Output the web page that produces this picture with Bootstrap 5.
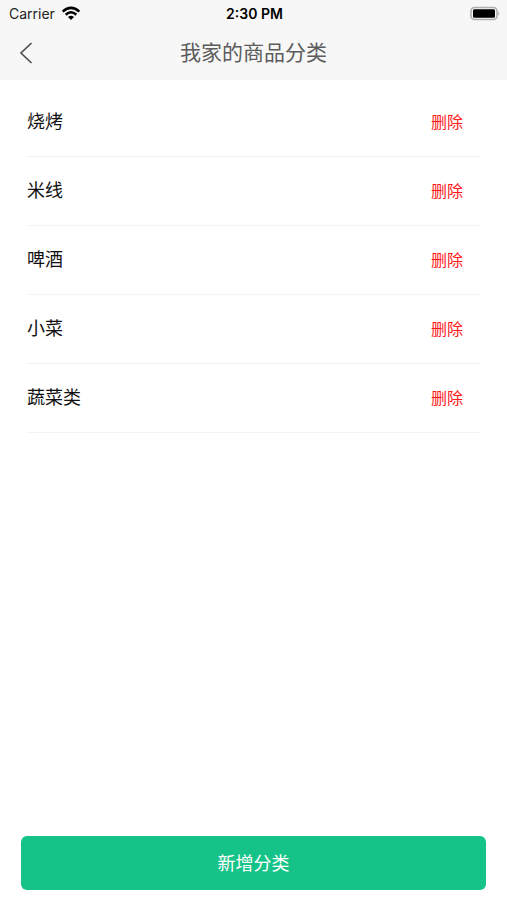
<!DOCTYPE html>
<html lang="zh-CN">
<head>
<meta charset="utf-8">
<meta name="viewport" content="width=device-width, initial-scale=1">
<title>我家的商品分类</title>
<link href="https://cdn.jsdelivr.net/npm/bootstrap@5.3.0/dist/css/bootstrap.min.css" rel="stylesheet">
<style>
body { font-family: Inter, "Noto Sans CJK SC", sans-serif; color: #111; }
.top-area { background: #f7f7f7; }
.status-bar { height: 27px; padding: 0 7px 0 9px; font-size: 14px; line-height: 20px; color: #222; }
.status-time { font-size: 14px; font-weight: 600; color: #000; }
.title-bar { height: 53px; padding: 0 11px 1px; }
.title-text { font-size: 21px; line-height: 28px; font-weight: 400; color: #5c5c5c; }
.back-btn { width: 30px; height: 30px; }
.category-list { padding: 8px 27px 0; }
.category-row { height: 69px; border-bottom: 1px solid #f3f3f3; }
.category-name { font-size: 18px; line-height: 26px; }
.delete-btn { font-size: 16px; line-height: 24px; color: #ff1a1a; margin-right: 17px; }
.bottom-area { padding: 0 21px 10px; }
.add-btn { height: 54px; padding: 2px 0 0; border-radius: 6px; background: #15c388; color: #fff; font-size: 18px; line-height: 26px; }
.add-btn:hover, .add-btn:active { background: #12b37c; color: #fff; }
</style>
</head>
<body class="bg-white">
<div class="d-flex flex-column min-vh-100">
  <header class="top-area">
    <div class="status-bar d-flex align-items-center">
      <div class="col d-flex align-items-center gap-1">
        <span>Carrier</span>
        <svg width="22" height="16" viewBox="0 0 22 16" fill="none" stroke="#000" stroke-width="2.6" aria-hidden="true">
          <path d="M3.7 5.6Q12 -2 20.3 5.6"/>
          <path d="M6.7 8.7Q12 3.8 17.3 8.7"/>
          <path d="M9 11Q12 8.5 15 11L12 14Z" fill="#000" stroke="none"/>
        </svg>
      </div>
      <span class="status-time">2:30 PM</span>
      <div class="col d-flex justify-content-end">
        <svg width="30" height="16" viewBox="0 0 30 16" aria-hidden="true">
          <rect x="1" y="1.5" width="26" height="12" rx="3.5" fill="#f7f7f7" stroke="#b0b0b0" stroke-width="1.6"/>
          <rect x="3" y="3.2" width="22" height="8.6" rx="1.3" fill="#000"/>
          <path d="M28.2 5.3Q30.5 7.5 28.2 9.7Z" fill="#b0b0b0"/>
        </svg>
      </div>
    </div>
    <div class="title-bar d-flex align-items-center">
      <button type="button" class="back-btn btn p-0 border-0 d-flex align-items-center justify-content-center" aria-label="返回">
        <svg width="14" height="22" viewBox="0 0 14 22" fill="none" stroke="#505050" stroke-width="1.7"><path d="M12.5 1L2 11L12.5 21"/></svg>
      </button>
      <h1 class="title-text flex-grow-1 text-center m-0">我家的商品分类</h1>
      <span class="back-btn"></span>
    </div>
  </header>
  <main class="flex-grow-1">
    <ul class="category-list list-unstyled m-0">
      <li class="category-row d-flex align-items-center justify-content-between"><span class="category-name">烧烤</span><button type="button" class="delete-btn btn p-0 border-0">删除</button></li>
      <li class="category-row d-flex align-items-center justify-content-between"><span class="category-name">米线</span><button type="button" class="delete-btn btn p-0 border-0">删除</button></li>
      <li class="category-row d-flex align-items-center justify-content-between"><span class="category-name">啤酒</span><button type="button" class="delete-btn btn p-0 border-0">删除</button></li>
      <li class="category-row d-flex align-items-center justify-content-between"><span class="category-name">小菜</span><button type="button" class="delete-btn btn p-0 border-0">删除</button></li>
      <li class="category-row d-flex align-items-center justify-content-between"><span class="category-name">蔬菜类</span><button type="button" class="delete-btn btn p-0 border-0">删除</button></li>
    </ul>
  </main>
  <footer class="bottom-area">
    <button type="button" class="add-btn btn w-100 border-0">新增分类</button>
  </footer>
</div>
<script src="https://cdn.jsdelivr.net/npm/bootstrap@5.3.0/dist/js/bootstrap.bundle.min.js"></script>
</body>
</html>
